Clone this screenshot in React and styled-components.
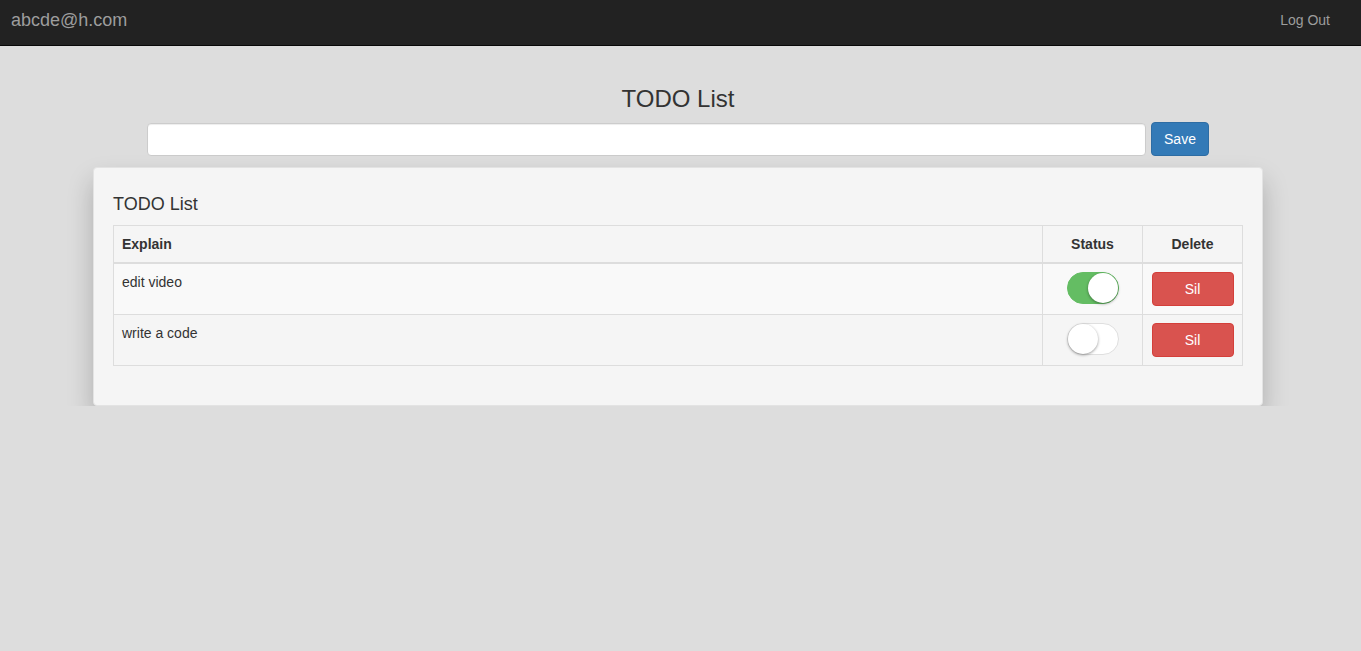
import React, { useState } from "react";
import styled, { createGlobalStyle } from "styled-components";

const GlobalStyle = createGlobalStyle`
	html, body {
		margin: 0;
		padding: 0;
		background: #dddddd;
		font-family: "Liberation Sans", Arial, sans-serif;
		font-size: 14px;
		color: #333;
	}
	* {
		box-sizing: border-box;
	}
`;

const NavBar = styled.nav`
	height: 46px;
	background: #222;
	border-bottom: 1px solid #080808;
	display: flex;
	align-items: center;
	justify-content: space-between;
	padding: 0 31px 0 11px;
`;

const Brand = styled.span`
	font-size: 18px;
	color: #9d9d9d;
	margin-top: -5px;
`;

const NavLink = styled.a`
	font-size: 14px;
	color: #9d9d9d;
	text-decoration: none;
	cursor: pointer;
	margin-top: -5px;
`;

const Main = styled.main`
	width: 1170px;
	margin-left: 93px;
	display: flex;
	flex-direction: column;
	align-items: center;
`;

const PageTitle = styled.h3`
	font-size: 24px;
	font-weight: 400;
	line-height: 1.1;
	margin: 40px 0 10px;
`;

const Form = styled.form`
	display: flex;
	gap: 5px;
	align-items: center;
`;

const Input = styled.input`
	width: 999px;
	height: 33px;
	border: 1px solid #ccc;
	border-radius: 4px;
	padding: 6px 12px;
	font-size: 14px;
	background: #fff;
	box-shadow: inset 0 1px 1px rgba(0, 0, 0, 0.075);
	outline: none;
`;

const Button = styled.button`
	height: 34px;
	padding: 6px 12px;
	font-family: inherit;
	font-size: 14px;
	color: #fff;
	border-radius: 4px;
	cursor: pointer;
	background: ${(p) => (p.$danger ? "#d9534f" : "#337ab7")};
	border: 1px solid ${(p) => (p.$danger ? "#d43f3a" : "#2e6da4")};
	width: ${(p) => (p.$danger ? "82px" : "auto")};
`;

const Well = styled.section`
	align-self: stretch;
	margin-top: 11px;
	background: #f5f5f5;
	border: 1px solid #e3e3e3;
	border-radius: 4px;
	padding: 19px;
	box-shadow: 0 14px 26px rgba(0, 0, 0, 0.22);
`;

const CardTitle = styled.h4`
	font-size: 18px;
	font-weight: 400;
	line-height: 1.1;
	margin: 8px 0 10px;
`;

const Table = styled.table`
	width: 100%;
	border-collapse: collapse;
	margin-bottom: 20px;
	border: 1px solid #ddd;
`;

const Th = styled.th`
	padding: 8px;
	line-height: 20px;
	text-align: ${(p) => (p.$center ? "center" : "left")};
	width: ${(p) => p.$w || "auto"};
	border: 1px solid #ddd;
	border-bottom: 2px solid #ddd;
	font-weight: 700;
`;

const Row = styled.tr`
	background: ${(p) => (p.$odd ? "#f9f9f9" : "transparent")};
`;

const Td = styled.td`
	padding: 8px;
	line-height: 20px;
	vertical-align: top;
	text-align: ${(p) => (p.$center ? "center" : "left")};
	border: 1px solid #ddd;
`;

const Switch = styled.span`
	display: inline-block;
	position: relative;
	width: 52px;
	height: 32px;
	border-radius: 20px;
	cursor: pointer;
	border: 1px solid ${(p) => (p.$on ? "#64bd63" : "#dfdfdf")};
	background: ${(p) => (p.$on ? "#64bd63" : "#fff")};
	vertical-align: top;
`;

const Knob = styled.span`
	position: absolute;
	top: 0;
	left: ${(p) => (p.$on ? "20px" : "0")};
	width: 30px;
	height: 30px;
	border-radius: 50%;
	background: #fff;
	box-shadow: 0 1px 3px rgba(0, 0, 0, 0.4);
`;

const Toggle = ({ on, onClick }) => (
	<Switch $on={on} onClick={onClick}>
		<Knob $on={on} />
	</Switch>
);

const App = () => {
	const [todos, setTodos] = useState([
		{ id: 1, text: "edit video", done: true },
		{ id: 2, text: "write a code", done: false },
	]);

	const toggle = (id) =>
		setTodos(todos.map((t) => (t.id === id ? { ...t, done: !t.done } : t)));

	return (
		<>
			<GlobalStyle />
			<NavBar>
				<Brand>abcde@h.com</Brand>
				<NavLink>Log Out</NavLink>
			</NavBar>
			<Main>
				<PageTitle>TODO List</PageTitle>
				<Form onSubmit={(e) => e.preventDefault()}>
					<Input type="text" />
					<Button type="submit">Save</Button>
				</Form>
				<Well>
					<CardTitle>TODO List</CardTitle>
					<Table>
						<thead>
							<tr>
								<Th>Explain</Th>
								<Th $center $w="100px">Status</Th>
								<Th $center $w="100px">Delete</Th>
							</tr>
						</thead>
						<tbody>
							{todos.map((t, idx) => (
								<Row key={t.id} $odd={idx % 2 === 0}>
									<Td>{t.text}</Td>
									<Td $center>
										<Toggle on={t.done} onClick={() => toggle(t.id)} />
									</Td>
									<Td $center>
										<Button $danger>Sil</Button>
									</Td>
								</Row>
							))}
						</tbody>
					</Table>
				</Well>
			</Main>
		</>
	);
};

export default App;
